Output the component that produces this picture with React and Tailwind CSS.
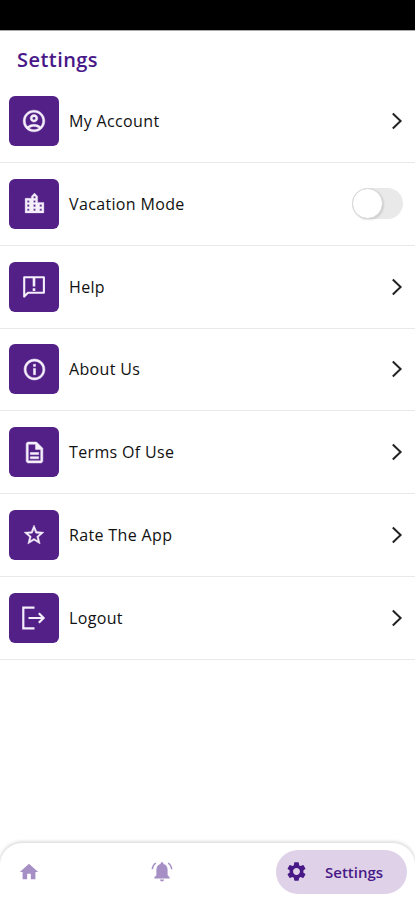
import {
  MdOutlineAccountCircle,
  MdLocationCity,
  MdInfoOutline,
  MdOutlineDescription,
  MdStarBorder,
  MdHome,
  MdSettings,
} from 'react-icons/md';

function LogoutIcon() {
  return (
    <svg width="26" height="26" viewBox="0 0 26 26" fill="none" stroke="currentColor" strokeWidth="2.2">
      <path d="M13.5 2.7H2.3v20.6h11.2" />
      <path d="M7.5 13h15M17.8 8.2 22.6 13l-4.8 4.8" />
    </svg>
  );
}

function HelpIcon() {
  return (
    <svg width="26" height="26" viewBox="0 0 26 26" fill="none" stroke="currentColor" strokeWidth="2.1" strokeLinejoin="round">
      <path d="M3.2 22.6V3.3h19.7v15.5H7z" />
      <path d="M13 4v8.5M13 14.3v2.6" strokeWidth="2.6" />
    </svg>
  );
}

function BellIcon() {
  return (
    <svg className="ml-[111px]" width="22" height="22" viewBox="0 0 22 22" fill="currentColor">
      <path d="M11 1.2c.9 0 1.5.6 1.5 1.5v.4c2.6.7 4.1 2.9 4.1 5.7v5.4l2 2v1.3H3.4v-1.3l2-2V8.8c0-2.8 1.5-5 4.1-5.7v-.4c0-.9.6-1.5 1.5-1.5zM9 18.6h4c0 1.2-.9 2-2 2s-2-.8-2-2z" />
      <path d="M4.8 2C2.7 3.5 1.5 5.6 1.3 8.2M17.2 2c2.1 1.5 3.3 3.6 3.5 6.2" fill="none" stroke="currentColor" strokeWidth="1.5" />
    </svg>
  );
}

function Chevron() {
  return (
    <svg className="mr-3" width="12" height="18" viewBox="0 0 12 18" fill="none" stroke="#222" strokeWidth="2">
      <path d="M1.8 1.5 9.6 9l-7.8 7.5" />
    </svg>
  );
}

function Toggle() {
  return (
    <div className="mr-3 flex h-[31px] w-[51px] items-center rounded-full bg-[#e9e9e9]">
      <div className="h-[31px] w-[31px] rounded-full border border-[#d6d6d6] bg-white shadow-[1px_1px_2px_rgba(0,0,0,0.12)]" />
    </div>
  );
}

const rows = [
  { label: 'My Account', icon: <MdOutlineAccountCircle size={26} stroke="currentColor" strokeWidth={0.4} /> },
  { label: 'Vacation Mode', icon: <MdLocationCity size={25} stroke="currentColor" strokeWidth={0.3} />, toggle: true },
  { label: 'Help', icon: <HelpIcon /> },
  { label: 'About Us', icon: <MdInfoOutline size={25} stroke="currentColor" strokeWidth={0.5} /> },
  { label: 'Terms Of Use', icon: <MdOutlineDescription size={25} stroke="currentColor" strokeWidth={0.5} /> },
  { label: 'Rate The App', icon: <MdStarBorder size={24} stroke="currentColor" strokeWidth={0.4} /> },
  { label: 'Logout', icon: <LogoutIcon /> },
];

export default function App() {
  return (
    <div className="flex h-[900px] w-full flex-col overflow-hidden bg-white font-['Open_Sans','Noto_Sans',sans-serif]">
      <div className="h-[30px] shrink-0 bg-black" />
      <h1 className="flex h-[50.3px] shrink-0 items-center border-t border-[#aaa] pt-[9px] pl-[17px] text-[20px] font-semibold tracking-[0.45px] text-[#481887]">
        Settings
      </h1>
      <div className="flex flex-col">
        {rows.map((row) => (
          <div
            key={row.label}
            className="flex h-[82.75px] items-center border-b-[1.5px] border-[#e9e9eb] pl-[9px]"
          >
            <div className="flex h-[50px] w-[50px] items-center justify-center rounded-[6px] bg-[#532087] text-[#f5eefb] [&_path[fill=none]]:stroke-none">
              {row.icon}
            </div>
            <span className="ml-[10px] flex-1 text-[16px] font-medium tracking-[0.35px] text-[#111]">
              {row.label}
            </span>
            {row.toggle ? <Toggle /> : <Chevron />}
          </div>
        ))}
      </div>
      <nav className="mt-auto flex h-[57px] shrink-0 items-center rounded-t-[22px] bg-white pr-2 pl-[18px] text-[#a68fc5] shadow-[0_-1px_3px_1px_rgba(60,60,80,0.16)]">
        <MdHome size={22} />
        <BellIcon />
        <div className="ml-auto flex h-[44px] w-[131px] items-center rounded-full bg-[#dfd2e8] pl-[9px] text-[#481887]">
          <MdSettings size={23} />
          <span className="ml-[17px] pt-px text-[15px] font-semibold">Settings</span>
        </div>
      </nav>
    </div>
  );
}
